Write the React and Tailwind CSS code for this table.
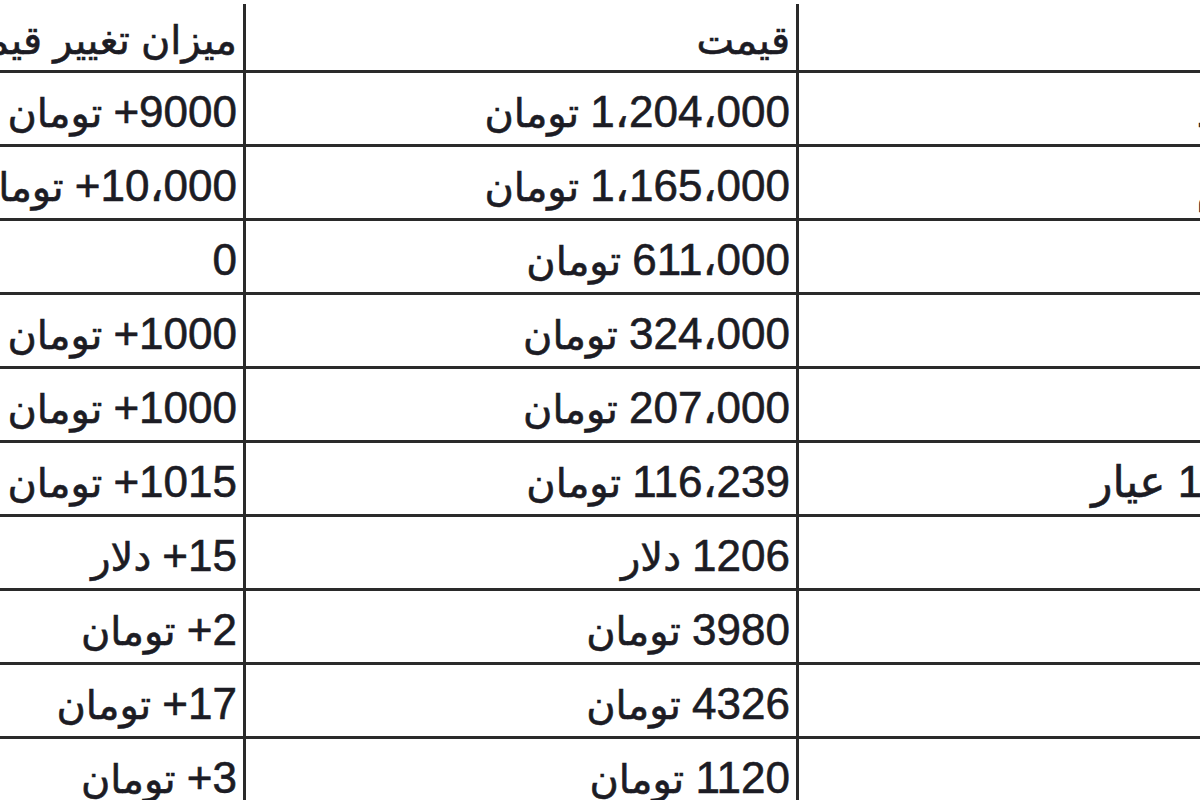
const rows = [
  { name: 'سکه طرح جدید', price: ['1،204،000', 'تومان'], change: ['9000+', 'تومان'] },
  { name: 'سکه طرح قدیم', price: ['1،165،000', 'تومان'], change: ['10،000+', 'تومان'] },
  { name: 'نیم سکه', price: ['611،000', 'تومان'], change: ['0', ''] },
  { name: 'ربع سکه', price: ['324،000', 'تومان'], change: ['1000+', 'تومان'] },
  { name: 'سکه گرمی', price: ['207،000', 'تومان'], change: ['1000+', 'تومان'] },
  { name: 'هر گرم طلای 18 عیار', price: ['116،239', 'تومان'], change: ['1015+', 'تومان'] },
  { name: 'انس طلا', price: ['1206', 'دلار'], change: ['15+', 'دلار'] },
  { name: 'دلار', price: ['3980', 'تومان'], change: ['2+', 'تومان'] },
  { name: 'یورو', price: ['4326', 'تومان'], change: ['17+', 'تومان'] },
  { name: 'درهم', price: ['1120', 'تومان'], change: ['3+', 'تومان'] },
];

const font = { fontFamily: '"Liberation Sans", "DejaVu Sans", sans-serif' };

const Amount = ({ value }) => {
  if (!Array.isArray(value)) return <span className="text-[40px]">{value}</span>;
  const [num, unit] = value;
  return (
    <span>
      {num}
      {unit && <span className="text-[40px]"> {unit}</span>}
    </span>
  );
};

const Row = ({ name, price, change, header }) => (
  <div className={`flex border-b-[3px] border-[#2a2a2a] ${header ? 'h-[69px]' : 'h-[74px]'}`}>
    <div className="w-[689px] shrink-0 border-l-[3px] border-[#2a2a2a] flex items-center pr-[6px] pt-[6px] whitespace-nowrap">
      {name}
    </div>
    <div className="w-[553px] shrink-0 border-l-[3px] border-[#2a2a2a] flex items-center pr-[6px] pt-[6px] whitespace-nowrap">
      <Amount value={price} />
    </div>
    <div className="flex-1 flex items-center pr-[6px] pt-[6px] whitespace-nowrap">
      <Amount value={change} />
    </div>
  </div>
);

const App = () => {
  return (
    <div className="w-[1200px] h-[800px] overflow-hidden bg-white">
      <div
        dir="rtl"
        className="w-[1635px] ml-[-150px] mt-[4px] text-[44px] leading-none text-[#1c1c24] [-webkit-text-stroke:0.6px_#1c1c24]"
        style={font}
      >
        <Row header name="" price="قیمت" change="میزان تغییر قیمت" />
        {rows.map((r) => (
          <Row key={r.name} {...r} />
        ))}
      </div>
    </div>
  );
};

export default App;
